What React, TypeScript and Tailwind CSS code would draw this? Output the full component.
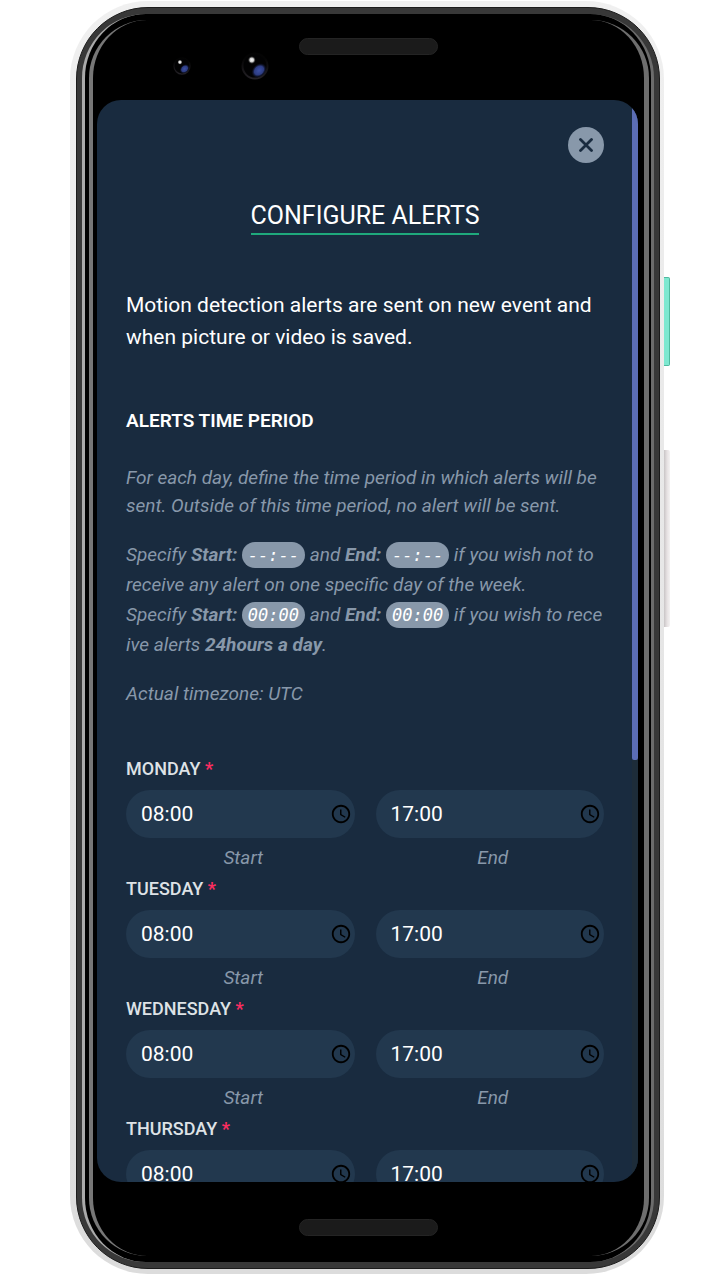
import React, { useState } from "react";
import { MdAccessTime } from "react-icons/md";

const DAYS = ["Monday", "Tuesday", "Wednesday", "Thursday"];

function Lens({ size }: { size: number }) {
  const id = `lens${size}`;
  return (
    <svg width={size} height={size} viewBox="0 0 28 28" aria-hidden="true">
      <defs>
        <radialGradient id={`${id}b`}>
          <stop offset="0" stopColor="#3c50a4" />
          <stop offset="0.6" stopColor="#2d3c82" />
          <stop offset="1" stopColor="#0a0d20" stopOpacity="0" />
        </radialGradient>
        <radialGradient id={`${id}w`}>
          <stop offset="0" stopColor="#fff" />
          <stop offset="0.5" stopColor="#ccc" />
          <stop offset="1" stopColor="#333" stopOpacity="0" />
        </radialGradient>
        <linearGradient id={`${id}r`} x1="0" y1="0" x2="0" y2="1">
          <stop offset="0.2" stopColor="#040404" />
          <stop offset="1" stopColor="#242126" />
        </linearGradient>
      </defs>
      <circle cx="14" cy="14" r="12.5" fill="#020203" stroke={`url(#${id}r)`} strokeWidth="2" />
      <ellipse cx="18" cy="18.5" rx="8.5" ry="6.5" fill={`url(#${id}b)`} transform="rotate(-42 18 18.5)" />
      <circle cx="10.8" cy="8" r="4" fill={`url(#${id}w)`} />
    </svg>
  );
}

function Speaker() {
  return <div className="h-[17px] w-[139px] rounded-full border border-[#242424] bg-[#1b1b1b]" />;
}

function Chip({ children }: { children: React.ReactNode }) {
  return (
    <code className="inline-block rounded-full bg-[#8898aa] px-1.5 font-['DejaVu_Sans_Mono',monospace] text-[17px] leading-[26px] text-white">
      {children}
    </code>
  );
}

function TimeField({ id, day, label, initial }: { id: string; day: string; label: string; initial: string }) {
  const [value, setValue] = useState(initial);
  return (
    <div className="min-w-0">
      <div className="flex h-12 items-center rounded-full bg-[#22384e] pr-[3px] pl-[15px]">
        <input
          id={id}
          type="text"
          inputMode="numeric"
          value={value}
          onChange={(e) => setValue(e.target.value)}
          aria-label={`${day} ${label}`}
          className="min-w-0 flex-1 bg-transparent text-[21px] leading-6 text-white outline-none"
        />
        <MdAccessTime className="size-[22px] shrink-0 text-black" aria-hidden="true" />
      </div>
      <label htmlFor={id} className="mt-1.5 block pl-1.5 text-center text-[19px] leading-7 text-[#8898aa] italic">
        {label}
      </label>
    </div>
  );
}

function DayRow({ day }: { day: string }) {
  const key = day.toLowerCase();
  return (
    <fieldset className="mb-[5px] min-w-0">
      <legend className="mb-[9px] text-[18px] leading-6 font-medium text-[#dee2e6] uppercase">
        {day} <span className="font-bold text-[#fb2d60]">*</span>
      </legend>
      <div className="grid grid-cols-2 gap-[21px]">
        <TimeField id={`${key}-start`} day={day} label="Start" initial="08:00" />
        <TimeField id={`${key}-end`} day={day} label="End" initial="17:00" />
      </div>
    </fieldset>
  );
}

function AlertSettings() {
  return (
    <div className="min-w-0 flex-1 overflow-y-auto pt-[27px] pr-7 pl-[29px] [scrollbar-width:none]">
      <div className="flex justify-end">
        <button
          type="button"
          aria-label="Close"
          className="flex size-9 items-center justify-center rounded-full bg-[#8898aa] text-[#192b3f]"
        >
          <svg width="14" height="14" viewBox="0 0 14 14" fill="none" stroke="currentColor" strokeWidth="2.8" strokeLinecap="round" aria-hidden="true">
            <path d="M1.5 1.5l11 11M12.5 1.5l-11 11" />
          </svg>
        </button>
      </div>
      <div className="mt-[37px] text-center">
        <h1 className="inline-block border-b-2 border-[#1fa97c] pb-px align-top text-[25px] leading-8 text-white uppercase">
          Configure alerts
        </h1>
      </div>
      <p className="mt-[54px] text-[21px] leading-8 text-white">
        Motion detection alerts are sent on new event and when picture or video is saved.
      </p>
      <h2 className="mt-14 text-[19px] leading-6 font-semibold text-white uppercase">Alerts time period</h2>
      <div className="text-[19px] text-[#8898aa] italic">
        <p className="mt-[31px] leading-7">
          For each day, define the time period in which alerts will be sent. Outside of this time period, no alert will
          be sent.
        </p>
        <p className="mt-5 leading-[30px] whitespace-nowrap">
          Specify <b>Start:</b> <Chip>--:--</Chip> and <b>End:</b> <Chip>--:--</Chip> if you wish not to
          <br />
          receive any alert on one specific day of the week.
          <br />
          Specify <b>Start:</b> <Chip>00:00</Chip> and <b>End:</b> <Chip>00:00</Chip> if you wish to rece
          <br />
          ive alerts <b>24hours a day</b>.
        </p>
        <p className="mt-5 leading-7">Actual timezone: UTC</p>
      </div>
      <form className="mt-[49px]">
        {DAYS.map((day) => (
          <DayRow key={day} day={day} />
        ))}
      </form>
    </div>
  );
}

export default function App() {
  return (
    <main className="flex h-screen flex-col bg-white pt-px pr-14 pb-[6px] pl-[70px] font-['Roboto',sans-serif]">
      <div className="relative flex min-h-0 flex-1 flex-col rounded-[78px] bg-linear-to-b from-[#f0f0f0] to-[#dcdcdc] pt-1.5 pr-1 pb-[5px] pl-[6px]">
        <div className="absolute top-[276px] -right-1.5 h-[89px] w-1.5 rounded-r-xs border-y border-r border-[#4fb99f] bg-[#7de8d0]" />
        <div className="absolute top-[449px] -right-1.5 h-[177px] w-1.5 rounded-r-xs bg-linear-to-r from-[#c9c5c6] via-[#e6e1e2] to-[#f4f2f2]" />
        <div className="flex min-h-0 flex-1 flex-col rounded-[72px] border border-[#1c1c1c] bg-[#383838] px-[5px] py-1.5">
          <div className="flex min-h-0 flex-1 flex-col rounded-[64px] border-r-[3px] border-l-[3px] border-r-[#6c6c6c] border-l-[#aaa] bg-black py-1.5 pr-0.5 pl-1">
            <div className="flex min-h-0 flex-1 flex-col rounded-[58px] border-r-[5px] border-l-[4px] border-r-[#6e6e6e] border-l-[#777] bg-black pr-1.5 pl-1">
              <div className="grid h-20 shrink-0 grid-cols-[1fr_139px_1fr] items-start pt-[18px] pl-0.5">
                <div className="flex items-center justify-end gap-[50px] pt-3.5 pr-[30px]">
                  <Lens size={18} />
                  <Lens size={28} />
                </div>
                <Speaker />
              </div>
              <div className="flex min-h-0 flex-1 overflow-hidden rounded-[24px] bg-[#192b3f]">
                <AlertSettings />
                <div className="w-1.5 shrink-0 bg-[#1d2c39]">
                  <div className="h-[61%] rounded-b-xs bg-[#5b6db5]" />
                </div>
              </div>
              <div className="flex h-[74px] shrink-0 justify-center pt-[37px] pl-0.5">
                <Speaker />
              </div>
            </div>
          </div>
        </div>
      </div>
    </main>
  );
}
